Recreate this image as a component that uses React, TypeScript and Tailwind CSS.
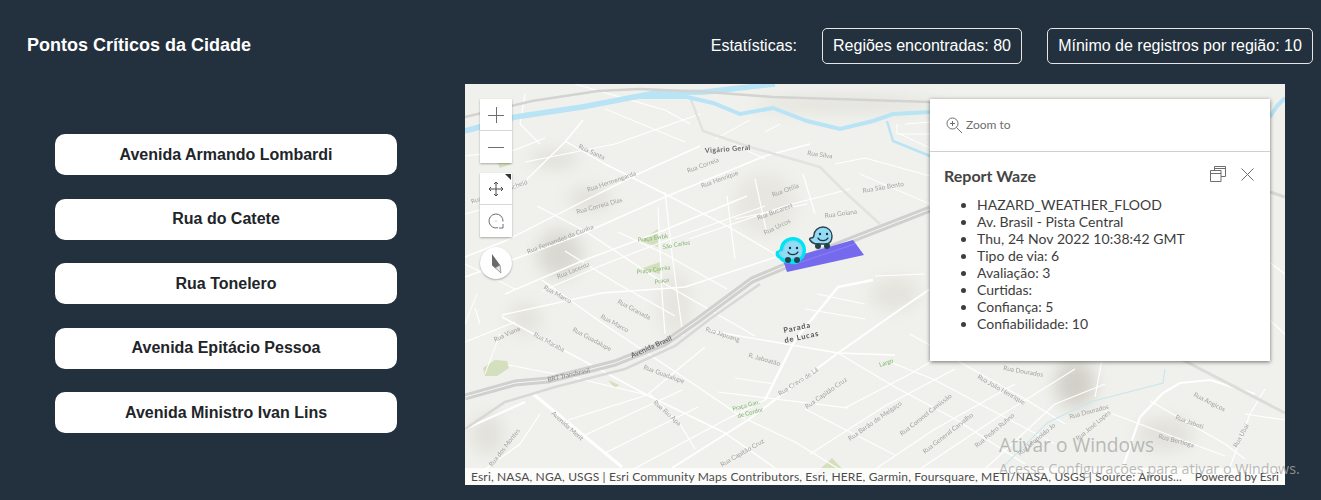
import React from 'react';

const streets: Array<[string, number]> = [
  ['0,193 63,170 117,150 200,113 300,72 345,60', 1.6],
  ['7,120 57,100 100,58 118,36', 1.4],
  ['100,57 140,80 200,110 262,142 310,170', 1.4],
  ['72,122 120,147 200,200 290,252', 1.4],
  ['100,167 153,200 210,232', 1.3],
  ['153,148 200,170 262,205', 1.2],
  ['193,123 197,210 200,250', 1.2],
  ['0,173 40,157 107,123 173,90 235,62', 1.4],
  ['40,210 117,177 197,147 282,112', 1.4],
  ['77,207 140,180 200,157 300,122', 1.2],
  ['37,233 182,311 260,349 310,384', 1.5],
  ['77,196 137,239 233,303 280,335', 1.4],
  ['37,231 137,209 220,203 320,170', 1.4],
  ['43,281 107,293 182,311', 1.2],
  ['103,336 182,311 240,263', 1.2],
  ['120,351 217,306', 1.2],
  ['140,369 233,323', 1.2],
  ['150,395 262,335 300,316', 1.2],
  ['67,309 157,383', 3],
  ['207,384 283,336 373,269 430,229 465,205', 2],
  ['300,316 330,256 373,203 408,196', 2.4],
  ['240,246 373,269 430,271', 1.3],
  ['253,308 383,324', 1.1],
  ['373,269 430,303 490,335 560,380', 1.3],
  ['340,325 430,371', 1.2],
  ['283,336 330,358 400,401', 1.2],
  ['380,324 445,290 530,240', 1.2],
  ['345,370 420,322 490,285', 1.2],
  ['400,392 470,345 550,300', 1.2],
  ['455,385 530,335 610,285', 1.2],
  ['520,385 590,320 640,300', 1.2],
  ['425,278 470,296 590,360', 1.2],
  ['445,250 560,315 600,340', 1.2],
  ['675,333 698,309 715,299 745,296 790,310', 2.2],
  ['675,333 658,383', 2.2],
  ['637,276 630,313', 1.2],
  ['685,317 760,360 780,375', 1.2],
  ['640,327 760,372', 1.2],
  ['800,305 785,330 765,383', 1.2],
  ['780,330 820,336', 1.2],
  ['60,10 55,40 75,60', 1.2],
  ['0,72 50,66 80,54', 1.2],
  ['0,130 30,122', 1.1],
  ['0,258 50,238', 1.1],
  ['10,224 15,240', 1.1],
  ['200,108 208,178 218,252', 1.2],
  ['262,112 270,175', 1.2],
  ['290,95 302,150', 1.2],
  ['338,90 350,130', 1.2],
  ['224,155 320,122 385,105', 1.2],
  ['270,135 342,120', 1.2],
  ['60,78 150,60 235,30', 1.2],
  ['250,55 285,36', 1],
  ['300,48 315,40', 1],
  ['370,80 400,74 465,92', 1.2],
  ['395,90 465,120', 1],
  ['440,40 465,38', 1],
  ['432,40 432,50 465,50', 1],
  ['435,50 465,64', 1],
  ['268,60 300,75', 1],
  ['410,192 460,190', 1],
  ['340,225 400,235', 1],
  ['352,210 400,220', 1],
  ['185,310 215,340 230,365', 1.2],
  ['270,294 310,300', 1],
  ['0,180 50,205', 1.1],
  ['0,345 60,318', 2],
  ['12,210 0,240', 1],
  ['35,250 20,290', 1],
  ['0,400 55,360 75,330', 1.2],
  ['110,0 200,26 225,40', 1.2],
  ['140,25 220,58', 1],
  ['742,180 820,250', 1.2],
  ['780,160 820,190', 1.2],
];

const shade: Array<[number, number, number, number, string]> = [
  [90, 75, 24, 8, '#dfded8'],
  [125, 115, 22, 12, '#e2e1db'],
  [95, 170, 22, 24, '#d9d8d1'],
  [60, 235, 16, 16, '#e4e3dd'],
  [300, 120, 30, 30, '#e7e6e0'],
  [22, 350, 16, 20, '#e2e1db'],
  [210, 220, 16, 32, '#e6e5df'],
  [430, 210, 24, 16, '#e4e3dd'],
  [610, 300, 20, 24, '#d2d0c9'],
  [700, 350, 28, 16, '#e2e1db'],
  [380, 20, 90, 7, '#e2e1db'],
];

const parks: Array<string> = [
  '18,284 30,276 42,277 44,284 32,292 20,292',
  '143,296 154,301 150,304',
  '175,157 193,145 193,163',
  '175,185 195,178 195,190',
  '353,387 367,374 380,388 350,395',
  '32,78 40,72 46,80 35,84',
];

const labels: Array<[number, number, number, string]> = [
  [63, 170, -21, 'Rua Fernandes da Cunha'],
  [7, 120, -20, 'Rua Henrique Scheid'],
  [123, 108, -19, 'Rua Hermengarda'],
  [113, 64, 25, 'Rua Santa'],
  [112, 130, -15, 'Rua Correia Dias'],
  [93, 195, -22, 'Rua Lacerda'],
  [78, 205, 28, 'Rua Marco'],
  [152, 219, 28, 'Rua Granada'],
  [135, 234, 28, 'Rua Marco'],
  [107, 247, 28, 'Rua Guadalupe'],
  [68, 252, 28, 'Rua Maraba'],
  [30, 258, -25, 'Rua Viana'],
  [178, 285, 20, 'Rua Guadalupe'],
  [188, 319, 42, 'Rua Rio Apa'],
  [86, 330, 42, 'Avenida Merit'],
  [240, 247, 18, 'Rua Japuang'],
  [283, 273, 16, 'R. Jaboatão'],
  [315, 312, -33, 'Rua Cravo de Lá'],
  [342, 325, -35, 'Rua Capitão Cruz'],
  [385, 357, -35, 'Rua Barão de Melgaço'],
  [257, 383, -30, 'Rua Capitão Cruz'],
  [27, 383, -52, 'Rua dos Montes'],
  [538, 286, 10, 'Rua Dourados'],
  [512, 294, 30, 'Rua João Henrique'],
  [437, 352, -38, 'Rua Coronel Camissão'],
  [460, 370, -38, 'Rua General Carvalho'],
  [512, 364, -40, 'Rua Pedro Rufino'],
  [605, 335, -15, 'Rua Dourados'],
  [613, 357, -40, 'Rua José Lopes'],
  [555, 372, -40, 'Rua Leopoldo Jo'],
  [728, 312, 27, 'Rua Angicos'],
  [710, 335, 20, 'Rua Jaboti'],
  [693, 354, 15, 'Rua Bertioga'],
  [772, 364, -62, 'Rua Ubaí'],
  [360, 134, -8, 'Rua Goiana'],
  [308, 113, -20, 'Rua Otília'],
  [293, 136, -20, 'Rua Bucarest'],
  [300, 151, -26, 'Rua Urcos'],
  [398, 109, -10, 'Rua São Bento'],
  [342, 71, 8, 'Rua Silva'],
  [223, 89, -20, 'Rua Correia'],
  [237, 104, -20, 'Rua Henrique'],
];

const greens: Array<[number, number, number, string]> = [
  [268, 327, -15, 'Praça Gan.'],
  [273, 334, -15, 'de Cordor'],
  [173, 158, -8, 'Praça Ewbk'],
  [172, 190, -8, 'Praça Corrêa'],
  [198, 165, -10, 'São Carlos'],
  [190, 200, -10, 'Praça'],
  [415, 283, -20, 'Largo'],
];

const Waze = ({ halo }: { halo?: boolean }) => (
  <svg width="34" height="34" viewBox="0 0 34 34">
    {halo && (
      <path
        d="M18 3c7 0 12 6 12 12 0 5-2 8-5 10-2 4-8 4-10 2-3 1-8 0-10-4-3-1-4-3-3-6 2 0 3-1 4-3 0-6 5-11 12-11z"
        fill="#00e3f2"
        stroke="#00e3f2"
        strokeWidth="2"
      />
    )}
    <path
      d="M18 6c5 0 9 4 9 9 0 4-2 7-5 8H12c-3 0-5-1-7-4-1-1 0-2 1-2 2 0 3-1 3-3 0-4 4-8 9-8z"
      fill="#93dcf5"
      stroke={halo ? '#8ad7ef' : '#2c3f4c'}
      strokeWidth="1.4"
    />
    <circle cx="15" cy="13" r="1.2" fill="#22323d" />
    <circle cx="22" cy="13" r="1.2" fill="#22323d" />
    <path d="M13 17c1.500 3.500 8 3.500 10 0" fill="none" stroke="#22323d" strokeWidth="1.3" strokeLinecap="round" />
    <circle cx="13" cy="25" r="3" fill="#22444e" />
    <circle cx="22" cy="25" r="3" fill="#22444e" />
  </svg>
);

const MapArt = () => (
  <svg className="absolute inset-0" width="820" height="401" viewBox="0 0 820 401">
    <defs>
      <filter id="soft">
        <feGaussianBlur stdDeviation="0.5" />
      </filter>
      <filter id="hill" x="-50%" y="-50%" width="200%" height="200%">
        <feGaussianBlur stdDeviation="8" />
      </filter>
    </defs>
    <rect width="820" height="401" fill="#f0f0ec" />
    <g filter="url(#hill)">
      {shade.map(([cx, cy, rx, ry, fill], i) => (
        <ellipse key={i} cx={cx} cy={cy} rx={rx} ry={ry} fill={fill} />
      ))}
    </g>
    <g filter="url(#soft)">
      {parks.map((points) => (
        <polygon key={points} points={points} fill="#d3dfbd" />
      ))}
      {streets.map(([points, width]) => (
        <polyline
          key={points}
          points={points}
          fill="none"
          stroke="#ffffff"
          strokeWidth={width}
          strokeLinejoin="round"
        />
      ))}
      <polyline
        points="225,13 238,47 285,63 355,83 382,110 415,140"
        fill="none"
        stroke="#e2e2df"
        strokeWidth="2.500"
        strokeLinejoin="round"
      />
      {/* rivers */}
      <polyline
        points="0,47 50,33 117,23 190,9 240,8 310,0"
        fill="none"
        stroke="#b8e4f6"
        strokeWidth="5.500"
      />
      <polyline
        points="175,13 222,13 248,19 275,30 308,24 342,37 375,45 408,37 428,30 465,28"
        fill="none"
        stroke="#b8e4f6"
        strokeWidth="4"
      />
      <polyline points="422,37 428,57 465,72" fill="none" stroke="#b8e4f6" strokeWidth="2.500" />
      <polyline points="805,33 812,22 820,14" fill="none" stroke="#b8e4f6" strokeWidth="4" />
      <polyline
        points="538,383 582,339 625,318 698,299 700,285"
        fill="none"
        stroke="#c9e7ee"
        strokeWidth="1.200"
      />
      {/* highways */}
      <polyline
        points="0,33 67,17 133,7 175,5 242,8 308,13 465,18"
        fill="none"
        stroke="#d3d3d1"
        strokeWidth="2.500"
      />
      <polyline
        points="0,313 50,299 83,296 150,279 200,259 233,236 287,196 342,173 465,125"
        fill="none"
        stroke="#d0d0cf"
        strokeWidth="7"
        strokeLinejoin="round"
      />
      <polyline
        points="0,313 50,299 83,296 150,279 200,259 233,236 287,196 342,173 465,125"
        fill="none"
        stroke="#ffffff"
        strokeWidth="0.800"
      />
      <polyline
        points="0,345 40,318 90,303 160,285 210,262 245,235 295,200"
        fill="none"
        stroke="#d8d8d6"
        strokeWidth="2.500"
      />
      <polyline points="718,276 820,329" fill="none" stroke="#dcdcd9" strokeWidth="3" />
      <polyline points="805,108 820,113" fill="none" stroke="#d8d8d6" strokeWidth="3" />
      <polygon points="322,188 318,176 388,156 399,171" fill="#7469ee" />
      <polyline points="330,180 390,160" fill="none" stroke="#8a80f2" strokeWidth="1" />
      {labels.map(([x, y, angle, text]) => (
        <text
          key={`${text}${x}`}
          x={x}
          y={y}
          transform={`rotate(${angle} ${x} ${y})`}
          fontSize="6.500"
          fontFamily="Lato, sans-serif"
          fill="#a3a3a3"
        >
          {text}
        </text>
      ))}
      {greens.map(([x, y, angle, text]) => (
        <text
          key={`${text}${x}`}
          x={x}
          y={y}
          transform={`rotate(${angle} ${x} ${y})`}
          fontSize="6"
          fontFamily="Lato, sans-serif"
          fill="#7fb56f"
        >
          {text}
        </text>
      ))}
      <text x="83" y="298" transform="rotate(-13 83 298)" fontSize="6.500" fontFamily="Lato, sans-serif" fill="#8a8a8a">
        BRT Transbrasil
      </text>
      <text x="167" y="274" transform="rotate(-24 167 274)" fontSize="7" fontWeight="700" fontFamily="Lato, sans-serif" fill="#666">
        Avenida Brasil
      </text>
      <text x="319" y="249" transform="rotate(-12 319 249)" fontSize="7.500" fontWeight="700" letterSpacing="0.8" fontFamily="Lato, sans-serif" fill="#555">
        Parada
      </text>
      <text x="320" y="259" transform="rotate(-12 320 259)" fontSize="7.500" fontWeight="700" letterSpacing="0.8" fontFamily="Lato, sans-serif" fill="#555">
        de Lucas
      </text>
      <text x="240" y="69" transform="rotate(-4 240 69)" fontSize="7" fontWeight="700" letterSpacing="0.4" fontFamily="Lato, sans-serif" fill="#666">
        Vigário Geral
      </text>
    </g>
  </svg>
);

const ZoomWidgets = () => (
  <div className="absolute left-[15px] top-[15px] flex flex-col">
    <div className="flex h-[64px] w-[32px] flex-col bg-white shadow-[0_1px_2px_rgba(0,0,0,0.3)]">
      <div className="flex h-[32px] items-center justify-center border-b border-[#d8d8d8]">
        <svg width="16" height="16" viewBox="0 0 16 16" stroke="#6e6e6e" fill="none">
          <path d="M0 8.500h16M8.500 0v16" />
        </svg>
      </div>
      <div className="flex h-[32px] items-center justify-center">
        <svg width="16" height="16" viewBox="0 0 16 16" stroke="#6e6e6e" fill="none">
          <path d="M0 8.500h16" />
        </svg>
      </div>
    </div>
    <div className="relative mt-[10px] flex h-[64px] w-[32px] flex-col bg-white shadow-[0_1px_2px_rgba(0,0,0,0.3)]">
      <div className="absolute right-[1px] top-[1px] h-0 w-0 border-l-[6px] border-t-[6px] border-l-transparent border-t-[#333]" />
      <div className="flex h-[32px] items-center justify-center border-b border-[#d8d8d8]">
        <svg width="16" height="16" viewBox="0 0 16 16" stroke="#4a4a4a" fill="none">
          <path d="M8 1v14M1 8h14M6 3l2-2 2 2M6 13l2 2 2-2M3 6 1 8l2 2M13 6l2 2-2 2" />
        </svg>
      </div>
      <div className="flex h-[32px] items-center justify-center">
        <svg width="16" height="16" viewBox="0 0 16 16" stroke="#6e6e6e" fill="none">
          <path d="M10 14.700A7 7 0 1 1 15 8.500" />
          <path d="M15 11v4h-4" />
          <circle cx="8" cy="8" r="0.500" fill="#6e6e6e" stroke="none" />
        </svg>
      </div>
    </div>
    <div className="mt-[10px] flex h-[32px] w-[32px] items-center justify-center rounded-full bg-white shadow-[0_1px_2px_rgba(0,0,0,0.3)]">
      <svg width="16" height="22" viewBox="0 0 16 22">
        <path d="M4 2l8 11 1 8-9-8z" fill="#6a6a6a" />
        <path d="M4 13l9 8-1-8-5 3z" fill="#e4e4e4" stroke="#777" strokeWidth="0.500" />
      </svg>
    </div>
  </div>
);

const Popup = () => (
  <div className="absolute left-[465px] top-[15px] h-[262px] w-[340px] bg-white font-['Lato',sans-serif] text-[#4c4c4c] shadow-[0_1px_4px_rgba(0,0,0,0.55)]">
    <div className="flex h-[53px] items-center gap-[4px] border-b border-[#cfcfcf] pl-[16px] text-[12px] text-[#6e6e6e]">
      <svg width="16" height="16" viewBox="0 0 16 16" stroke="#6e6e6e" fill="none">
        <circle cx="6.500" cy="6.500" r="5.500" />
        <path d="M10.500 10.500 16 16M6.500 4v5M4 6.500h5" />
      </svg>
      <span>Zoom to</span>
    </div>
    <div className="flex items-start justify-between pl-[14px] pr-[16px] pt-[14px]">
      <h2 className="text-[16px] font-bold leading-[20px] text-[#444]">Report Waze</h2>
      <div className="flex items-center gap-[15px]">
        <svg width="16" height="16" viewBox="0 0 16 16" stroke="#6e6e6e" fill="none">
          <path d="M4.500 4V.5h11v10H11M.5 4.500h10.500v11H.5zM.5 7.500H11M4.500 2.500h11" />
        </svg>
        <svg width="13" height="13" viewBox="0 0 13 13" stroke="#6e6e6e" fill="none">
          <path d="M.5.5l12 12M12.500.5l-12 12" />
        </svg>
      </div>
    </div>
    <ul className="mt-[10px] list-disc pl-[47px] text-[14px] leading-[17px] text-[#3d3d3d]">
      <li>HAZARD_WEATHER_FLOOD</li>
      <li>Av. Brasil - Pista Central</li>
      <li className="tracking-[0.07px]">Thu, 24 Nov 2022 10:38:42 GMT</li>
      <li>Tipo de via: 6</li>
      <li>Avaliação: 3</li>
      <li>Curtidas:</li>
      <li>Confiança: 5</li>
      <li>Confiabilidade: 10</li>
    </ul>
  </div>
);

const places = [
  'Avenida Armando Lombardi',
  'Rua do Catete',
  'Rua Tonelero',
  'Avenida Epitácio Pessoa',
  'Avenida Ministro Ivan Lins',
];

export default function App() {
  return (
    <div className="relative h-[500px] w-[1321px] overflow-hidden bg-[#22313d] font-['Liberation_Sans',sans-serif] text-white">
      <header className="flex h-[84px] items-center pl-[27px] pr-[8px] pt-[8px]">
        <h1 className="-mt-[2px] text-[18px] font-bold">Pontos Críticos da Cidade</h1>
        <div className="ml-auto flex items-center text-[16px]">
          <span className="mr-[25px]">Estatísticas:</span>
          <span className="mr-[25px] flex h-[36px] w-[200px] items-center justify-center rounded-[5px] border border-[#e4e6e8]">
            Regiões encontradas: 80
          </span>
          <span className="flex h-[36px] w-[266px] items-center justify-center rounded-[5px] border border-[#e4e6e8]">
            Mínimo de registros por região: 10
          </span>
        </div>
      </header>
      <main className="flex">
        <aside className="flex w-[465px] flex-col gap-[23.5px] pl-[55px] pt-[50px]">
          {places.map((place) => (
            <button
              key={place}
              className="h-[41px] w-[342px] rounded-[10px] bg-white text-[16px] font-bold text-[#212529]"
            >
              {place}
            </button>
          ))}
        </aside>
        <section className="relative h-[401px] w-[820px] overflow-hidden">
          <MapArt />
          <div className="absolute left-[310px] top-[151px]">
            <Waze halo />
          </div>
          <div className="absolute left-[340px] top-[137px]">
            <Waze />
          </div>
          <ZoomWidgets />
          <Popup />
          <div className="absolute bottom-0 left-0 flex h-[17px] w-full items-center justify-between bg-white/80 px-[6px] font-['Lato',sans-serif] text-[12px] tracking-[0.16px] text-[#4c4c4c]">
            <span className="w-[712px] truncate">
              Esri, NASA, NGA, USGS | Esri Community Maps Contributors, Esri, HERE, Garmin, Foursquare, METI/NASA, USGS | Source: Airous...
            </span>
            <span className="tracking-normal">Powered by Esri</span>
          </div>
        </section>
      </main>
      <div className="pointer-events-none absolute left-[999px] top-[431px] font-['Open_Sans',sans-serif] text-[#a8aaa9]/80">
        <p className="text-[19.2px] leading-[28px]">Ativar o Windows</p>
        <p className="text-[14.3px] leading-[19px]">Acesse Configurações para ativar o Windows.</p>
      </div>
    </div>
  );
}
